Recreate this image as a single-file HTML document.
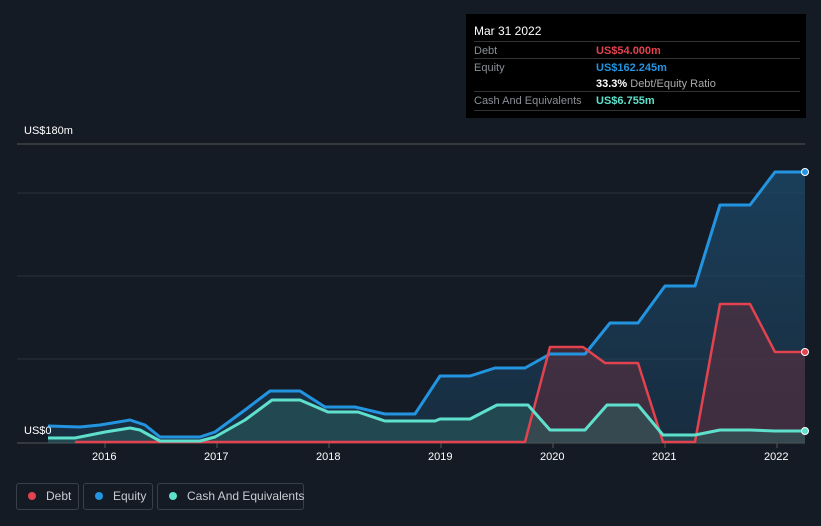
<!DOCTYPE html><html><head><style>
body{margin:0;width:821px;height:526px;background:#151b25;font-family:"Liberation Sans",sans-serif;overflow:hidden;position:relative}
.tt{position:absolute;left:466px;top:14px;width:340px;height:104px;background:#000;color:#fff;font-size:11px}
.row{position:absolute;left:8px;width:326px;border-top:1px solid #333;height:16px}
.lab{position:absolute;left:0;top:3px;color:#8a8f96}
.val{position:absolute;left:122px;top:3px;font-weight:bold}
.leg{position:absolute;top:483px;height:27px;border:1px solid #3a404a;border-radius:3px;color:#c8ccd2;font-size:12px;line-height:25px;box-sizing:border-box;white-space:nowrap}
.dot{display:inline-block;width:8px;height:8px;border-radius:50%;margin:0 10px 0 11px;vertical-align:0px}
.ax{position:absolute;color:#fff;font-size:11px}
</style></head><body>
<svg width="821" height="526" style="position:absolute;left:0;top:0">
<defs>
<linearGradient id="ge" x1="0" y1="0" x2="0" y2="1"><stop offset="0" stop-color="#1d4d70" stop-opacity=".7"/><stop offset="1" stop-color="#1d4d70" stop-opacity=".35"/></linearGradient>
</defs>
<g stroke="#2a303a" stroke-width="1"><line x1="17" y1="144" x2="805" y2="144" stroke="#555"/><line x1="17" y1="193" x2="805" y2="193"/><line x1="17" y1="276" x2="805" y2="276"/><line x1="17" y1="359" x2="805" y2="359"/><line x1="17" y1="443" x2="805" y2="443" stroke="#555"/></g>
<g stroke="#555"><line x1="105" y1="443" x2="105" y2="448"/><line x1="217" y1="443" x2="217" y2="448"/><line x1="329" y1="443" x2="329" y2="448"/><line x1="441" y1="443" x2="441" y2="448"/><line x1="553" y1="443" x2="553" y2="448"/><line x1="665" y1="443" x2="665" y2="448"/><line x1="777" y1="443" x2="777" y2="448"/></g>
<path d="M48,426 L80,427 L100,425 L130,420 L145,425 L160,437 L200,437 L215,432 L245,410 L270,391 L300,391 L325,407 L355,407 L385,414 L415,414 L440,376 L470,376 L495,368 L525,368 L550,354 L585,354 L610,323 L638,323 L665,286 L695,286 L720,205 L750,205 L775,172 L805,172 L805,443 L48,443Z" fill="url(#ge)"/>
<path d="M75,442 L525,442 L550,347 L583,347 L605,363 L638,363 L663,442 L695,442 L720,304 L750,304 L775,352 L805,352 L805,443 L75,443Z" fill="#5a2e3e" opacity=".6"/>
<path d="M48,438 L75,438 L105,432 L130,428 L140,430 L160,441 L200,441 L215,437 L245,420 L272,400 L300,400 L328,412 L358,412 L385,421 L435,421 L440,419 L470,419 L497,405 L528,405 L550,430 L585,430 L607,405 L638,405 L663,435 L695,435 L720,430 L750,430 L775,431 L805,431 L805,443 L48,443Z" fill="#2f6b66" opacity=".45"/>
<path d="M48,426 L80,427 L100,425 L130,420 L145,425 L160,437 L200,437 L215,432 L245,410 L270,391 L300,391 L325,407 L355,407 L385,414 L415,414 L440,376 L470,376 L495,368 L525,368 L550,354 L585,354 L610,323 L638,323 L665,286 L695,286 L720,205 L750,205 L775,172 L805,172" fill="none" stroke="#2394e0" stroke-width="3" stroke-linejoin="round"/>
<path d="M75,442 L525,442 L550,347 L583,347 L605,363 L638,363 L663,442 L695,442 L720,304 L750,304 L775,352 L805,352" fill="none" stroke="#e2434f" stroke-width="2.5" stroke-linejoin="round"/>
<path d="M48,438 L75,438 L105,432 L130,428 L140,430 L160,441 L200,441 L215,437 L245,420 L272,400 L300,400 L328,412 L358,412 L385,421 L435,421 L440,419 L470,419 L497,405 L528,405 L550,430 L585,430 L607,405 L638,405 L663,435 L695,435 L720,430 L750,430 L775,431 L805,431" fill="none" stroke="#5fe0cc" stroke-width="3" stroke-linejoin="round"/>
<circle cx="805" cy="172" r="3.5" fill="#2394e0" stroke="#fff" stroke-width="1"/>
<circle cx="805" cy="352" r="3.5" fill="#e2434f" stroke="#fff" stroke-width="1"/>
<circle cx="805" cy="431" r="3.5" fill="#5fe0cc" stroke="#fff" stroke-width="1"/>
</svg>
<div class="ax" style="left:24px;top:125px">US$180m</div>
<div class="ax" style="left:24px;top:425px">US$0</div>
<div class="ax" style="left:92px;top:451px">2016</div>
<div class="ax" style="left:204px;top:451px">2017</div>
<div class="ax" style="left:316px;top:451px">2018</div>
<div class="ax" style="left:428px;top:451px">2019</div>
<div class="ax" style="left:540px;top:451px">2020</div>
<div class="ax" style="left:652px;top:451px">2021</div>
<div class="ax" style="left:764px;top:451px">2022</div>
<div class="tt">
<div style="position:absolute;left:8px;top:10px;font-size:12px">Mar 31 2022</div>
<div class="row" style="top:27px"><span class="lab">Debt</span><span class="val" style="color:#e2434f">US$54.000m</span></div>
<div class="row" style="top:44px"><span class="lab">Equity</span><span class="val" style="color:#2394e0">US$162.245m</span></div>
<div class="row" style="top:61px;border-top:none"><span class="val" style="color:#fff">33.3% <span style="color:#aaa;font-weight:normal">Debt/Equity Ratio</span></span></div>
<div class="row" style="top:77px;height:18px;border-bottom:1px solid #333"><span class="lab">Cash And Equivalents</span><span class="val" style="color:#5fe0cc">US$6.755m</span></div>
</div>
<div class="leg" style="left:16px;width:63px"><span class="dot" style="background:#e2434f"></span>Debt</div>
<div class="leg" style="left:83px;width:70px"><span class="dot" style="background:#2394e0"></span>Equity</div>
<div class="leg" style="left:157px;width:147px"><span class="dot" style="background:#5fe0cc"></span>Cash And Equivalents</div>
</body></html>
